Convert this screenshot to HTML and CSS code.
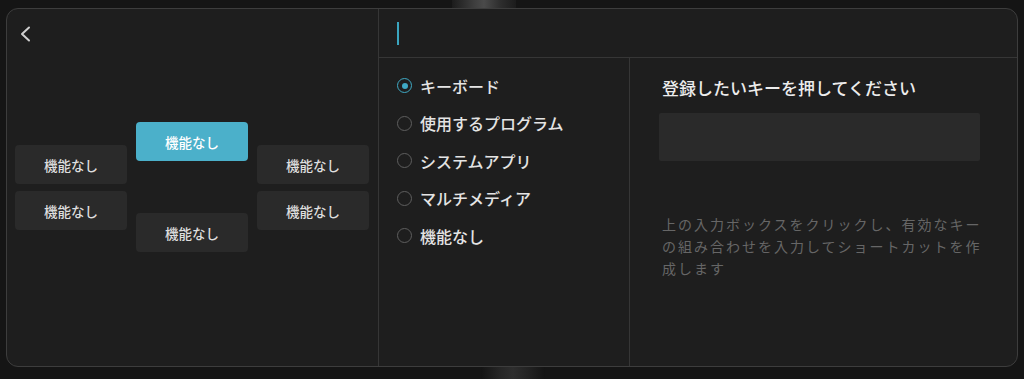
FILE: index.html
```html
<!DOCTYPE html>
<html>

<head>

<meta charset="utf-8">
<title>キー設定</title>

<link rel="stylesheet" href="styles.css">

</head>

<body>

<div class="knob knob_top"></div>
<div class="knob knob_bottom"></div>

<div id="panel">

   <div id="leftcol">
      <div class="back">
         <svg width="12" height="16" viewBox="0 0 12 16">
            <path d="M10 1.5 L3 8 L10 14.5" fill="none" stroke="#cfcfcf" stroke-width="2" stroke-linecap="round" stroke-linejoin="round"/>
         </svg>
      </div>

      <div class="keygrid">
         <div class="keycol side">
            <div class="key">機能なし</div>
            <div class="key">機能なし</div>
         </div>
         <div class="keycol middle">
            <div class="key active">機能なし</div>
            <div class="key">機能なし</div>
         </div>
         <div class="keycol side">
            <div class="key">機能なし</div>
            <div class="key">機能なし</div>
         </div>
      </div>
   </div>

   <div id="rightpart">

      <div class="namebar">
         <span class="caret"></span>
      </div>

      <div class="body">

         <div id="typecol">
            <div class="radio checked"><span class="dot"></span>キーボード</div>
            <div class="radio"><span class="dot"></span>使用するプログラム</div>
            <div class="radio"><span class="dot"></span>システムアプリ</div>
            <div class="radio"><span class="dot"></span>マルチメディア</div>
            <div class="radio"><span class="dot"></span>機能なし</div>
         </div>

         <div id="detailcol">
            <p class="title">登録したいキーを押してください</p>
            <div class="keybox"></div>
            <p class="hint">上の入力ボックスをクリックし、有効なキーの組み合わせを入力してショートカットを作成します</p>
         </div>

      </div>
   </div>

</div>

</body>

</html>
```

FILE: styles.css
```css
html , body {
   margin:0px;
   padding:0px;
   border:0px;
   width:100%;
   height:100%;
}

body {
   background:#151515;
   font-family:"Noto Sans CJK JP", "Noto Sans", sans-serif;
   color:#e6e6e6;
   padding:8px 6px;
   box-sizing:border-box;
   position:relative;
   overflow:hidden;
}

/* the stand of the device, peeking out above and below */
.knob {
   position:absolute;
   background:linear-gradient(to right, #1c1c1c, #3e3e3e 35%, #4a4a4a 50%, #2e2e2e 75%, #1c1c1c);
}

.knob_top {
   left:452px;
   top:0px;
   width:64px;
   height:12px;
}

.knob_bottom {
   left:481px;
   top:360px;
   width:64px;
   height:19px;
   background:linear-gradient(to right, #141414, #262626 30%, #2e2e2e 50%, #222 75%, #141414);
}

#panel {
   position:relative;
   display:flex;
   width:1012px;
   height:359px;
   box-sizing:border-box;
   border:1px solid #3d3d3d;
   border-radius:12px;
   background:#1e1e1e;
   overflow:hidden;
}

#leftcol {
   width:372px;
   box-sizing:border-box;
   border-right:1px solid #363636;
   padding:17px 8px 0px 8px;
}

.back {
   height:16px;
   padding-left:4px;
}

.back svg {
   display:block;
}

.keygrid {
   display:grid;
   grid-template-columns:repeat(3, 112px);
   column-gap:9px;
   margin-top:80px;
}

.keycol {
   display:flex;
   flex-direction:column;
}

.keycol.side {
   padding-top:23px;
   gap:7px;
}

.keycol.middle {
   gap:52px;
}

.key {
   height:39px;
   display:flex;
   align-items:center;
   justify-content:center;
   background:#2a2a2a;
   border-radius:4px;
   font-size:13.5px;
   font-weight:500;
   color:#dedede;
}

.key.active {
   background:#4bb0ca;
   color:#ffffff;
}

#rightpart {
   flex:1;
   display:flex;
   flex-direction:column;
}

.namebar {
   height:49px;
   border-bottom:1px solid #363636;
   padding:13px 0px 0px 18px;
   box-sizing:border-box;
}

.caret {
   display:block;
   width:2px;
   height:23px;
   background:#3aa5bf;
}

.body {
   flex:1;
   display:flex;
}

#typecol {
   width:251px;
   box-sizing:border-box;
   border-right:1px solid #363636;
   padding:9px 0px 0px 18px;
}

.radio {
   height:37.5px;
   display:flex;
   align-items:center;
   gap:8px;
   font-size:16px;
   font-weight:500;
   color:#e4e4e4;
}

.dot {
   width:15px;
   height:15px;
   box-sizing:border-box;
   border:1.5px solid #5e5e5e;
   border-radius:50%;
   display:flex;
   align-items:center;
   justify-content:center;
}

.radio.checked .dot {
   border-color:#3fa9c4;
}

.radio.checked .dot::after {
   content:"";
   width:6px;
   height:6px;
   border-radius:50%;
   background:#3fa9c4;
}

#detailcol {
   flex:1;
   padding:18px 0px 0px 29px;
}

p.title {
   margin:0px;
   padding-left:3px;
   font-size:17px;
   font-weight:500;
   line-height:24px;
   color:#ececec;
}

.keybox {
   width:321px;
   height:48px;
   margin-top:13px;
   background:#2a2a2a;
   border-radius:2px;
}

p.hint {
   margin:52px 0px 0px 0px;
   padding-left:3px;
   width:324px;
   font-size:14px;
   line-height:22px;
   letter-spacing:2px;
   color:#666666;
}
```
